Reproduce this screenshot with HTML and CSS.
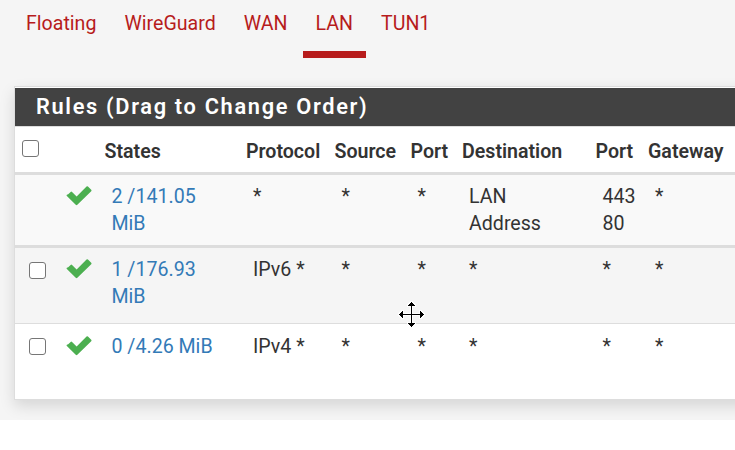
FILE: index.html
```html
<!DOCTYPE html>
<html lang="en">
<head>
<meta charset="utf-8">
<title>Firewall Rules</title>
<link rel="stylesheet" href="styles.css">
</head>
<body>
<svg class="defs" width="0" height="0"><symbol id="check" viewBox="0 0 26 20"><path d="M2.1 8.2 4.5 5.8Q5.2 5.1 5.9 5.8L10.4 10.3 20.1.6Q20.8 0 21.5.6L24.7 3.7Q25.4 4.4 24.7 5.1L11.1 18.5Q10.3 19.2 9.5 18.5L.8 9.9Q.1 9.2.8 8.5Z" /></symbol></svg>
<main class="page">
  <nav class="tabs">
    <a>Floating</a><a>WireGuard</a><a>WAN</a><a class="active">LAN</a><a>TUN1</a>
  </nav>
  <section class="panel">
    <h2>Rules (Drag to Change Order)</h2>
    <div class="row head">
      <div class="select"><input type="checkbox" aria-label="Select all"></div><div></div><div>States</div><div>Protocol</div><div>Source</div><div>Port</div><div>Destination</div><div>Port</div><div>Gateway</div>
    </div>
    <div class="row lockout">
      <div></div><div class="status"><svg><use href="#check"/></svg></div><div class="link">2 /141.05<br>MiB</div><div>*</div><div>*</div><div>*</div><div>LAN<br>Address</div><div>443<br>80</div><div>*</div>
    </div>
    <div class="row ipv6">
      <div class="select"><input type="checkbox" aria-label="Select rule"></div><div class="status"><svg><use href="#check"/></svg></div><div class="link">1 /176.93<br>MiB</div><div>IPv6 *</div><div>*</div><div>*</div><div>*</div><div>*</div><div>*</div>
    </div>
    <div class="row ipv4">
      <div class="select"><input type="checkbox" aria-label="Select rule"></div><div class="status"><svg><use href="#check"/></svg></div><div class="link">0 /4.26 MiB</div><div>IPv4 *</div><div>*</div><div>*</div><div>*</div><div>*</div><div>*</div>
    </div>
  </section>
</main>
<svg class="cursor" viewBox="0 0 27 27" shape-rendering="crispEdges">
  <path id="move" d="M13 1h1v1h1v1h1v1h1v1h-3v8h8v-3h1v1h1v1h1v1h1v1h-1v1h-1v1h-1v1h-1v-3h-8v8h3v1h-1v1h-1v1h-1v1h-1v-1h-1v-1h-1v-1h-1v-1h3v-8H5v3H4v-1H3v-1H2v-1H1v-1h1v-1h1v-1h1v-1h1v3h8V5h-3V4h1V3h1V2h1Z"/>
</svg>
</body>
</html>
```

FILE: styles.css
```css
* { box-sizing: border-box; }
body { margin: 0; background: #fff; color: #333; font: 19.6px/27px Roboto, sans-serif; overflow: hidden; }
.defs { position: absolute; }
.page { height: 420px; background: #f5f5f5; overflow: hidden; }
.tabs { display: flex; height: 86px; padding-left: 14px; color: #b71c1c; }
.tabs a { height: 58px; padding: 10px 12px 0; margin-right: 4px; }
.tabs .active { padding-right: 13px; margin-right: 3px; border-bottom: 7px solid #b71c1c; }
.panel { width: 740px; height: 314px; margin-left: 14px; padding-top: 1px; border: 1px solid #ddd; background: #fff; box-shadow: 0 6px 14px rgba(0, 0, 0, .13); }
h2 { height: 39px; margin: 0; padding: 5px 21px 0; border-bottom: 1px solid #ddd; background: #424242; background-clip: padding-box; color: #fff; font-size: 21.8px; font-weight: 600; line-height: 27px; letter-spacing: 1.67px; white-space: nowrap; }
.row { display: grid; grid-template-columns: 37px 45.5px 141.5px 88.5px 76px 51.5px 133.5px 52.5px 1fr; white-space: nowrap; }
.row > div { padding: 8px 0 0 14px; }
.row.head { height: 48px; border-bottom: 3px solid #ddd; font-weight: 600; }
.row.head > div { padding: 11px 0 0 7px; }
.row.lockout { height: 73px; border-bottom: 3px solid #ddd; background: #f9f9f9; }
.row.ipv6 { height: 76px; border-bottom: 1px solid #ddd; background: #f5f5f5; }
.row.ipv4 > div { padding-top: 8.5px; }
.link { color: #337ab7; }
.row > .select, .row.ipv4 > .select { padding-top: 14px; }
.row.head > .select { padding-top: 13px; }
.row > .status { padding: 11px 0 0 14px; }
.row.ipv4 > .status { padding-top: 12px; }
.status svg { display: block; width: 26.6px; height: 20.4px; fill: #4caf50; }
input { display: block; width: 17px; height: 17px; margin: 0; appearance: none; border: 1.4px solid #767676; border-radius: 3px; background: #fff; }
.cursor { position: absolute; left: 398px; top: 301px; width: 27px; height: 27px; fill: #000; stroke: #fff; stroke-width: 2px; paint-order: stroke; }
```
